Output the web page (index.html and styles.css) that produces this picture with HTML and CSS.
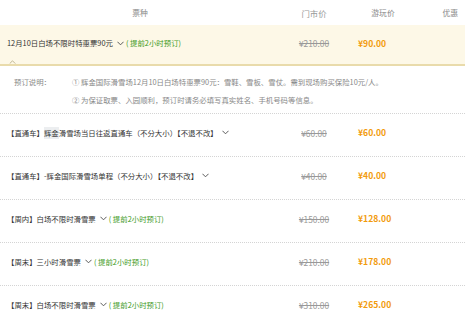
FILE: index.html
```html
<!DOCTYPE html>
<html lang="zh">
<head>
<meta charset="utf-8">
<link rel="stylesheet" href="styles.css">
</head>
<body>
<div class="table">
  <div class="row head">
    <div class="c-name">票种</div>
    <div class="c-mkt">门市价</div>
    <div class="c-play">游玩价</div>
    <div class="c-disc">优惠</div>
  </div>

  <div class="row active">
    <div class="c-name">12月10日白场不限时特惠票90元<svg class="chev" viewBox="0 0 8 5"><polyline points="0.5,0.5 4,4 7.5,0.5"/></svg><span class="tip">( 提前2小时预订)</span></div>
    <div class="c-mkt"><s>¥210.00</s></div>
    <div class="c-play"><b>¥90.00</b></div>
    <div class="c-disc"></div>
    <svg class="caret" viewBox="0 0 8 5"><polyline points="0.5,4.5 4,1 7.5,4.5"/></svg>
  </div>

  <div class="detail">
    <div class="d-label">预订说明：</div>
    <div class="d-body">
      <p>① 辉金国际滑雪场12月10日白场特惠票90元：雪鞋、雪板、雪仗。需到现场购买保险10元/人。</p>
      <p>② 为保证取票、入园顺利，预订时请务必填写真实姓名、手机号码等信息。</p>
    </div>
  </div>

  <div class="row item">
    <div class="c-name">【直通车】<span class="hl">辉金</span>滑雪场当日往返直通车（不分大小）【不退不改】<svg class="chev" viewBox="0 0 8 5"><polyline points="0.5,0.5 4,4 7.5,0.5"/></svg></div>
    <div class="c-mkt"><s>¥60.00</s></div>
    <div class="c-play"><b>¥60.00</b></div>
    <div class="c-disc"></div>
  </div>

  <div class="row item">
    <div class="c-name">【直通车】-辉金国际滑雪场单程（不分大小）【不退不改】<svg class="chev" viewBox="0 0 8 5"><polyline points="0.5,0.5 4,4 7.5,0.5"/></svg></div>
    <div class="c-mkt"><s>¥40.00</s></div>
    <div class="c-play"><b>¥40.00</b></div>
    <div class="c-disc"></div>
  </div>

  <div class="row item">
    <div class="c-name">【周内】白场不限时滑雪票<svg class="chev" viewBox="0 0 8 5"><polyline points="0.5,0.5 4,4 7.5,0.5"/></svg><span class="tip">( 提前2小时预订)</span></div>
    <div class="c-mkt"><s>¥150.00</s></div>
    <div class="c-play"><b>¥128.00</b></div>
    <div class="c-disc"></div>
  </div>

  <div class="row item">
    <div class="c-name">【周末】三小时滑雪票<svg class="chev" viewBox="0 0 8 5"><polyline points="0.5,0.5 4,4 7.5,0.5"/></svg><span class="tip">( 提前2小时预订)</span></div>
    <div class="c-mkt"><s>¥210.00</s></div>
    <div class="c-play"><b>¥178.00</b></div>
    <div class="c-disc"></div>
  </div>

  <div class="row item">
    <div class="c-name">【周末】白场不限时滑雪票<svg class="chev" viewBox="0 0 8 5"><polyline points="0.5,0.5 4,4 7.5,0.5"/></svg><span class="tip">( 提前2小时预订)</span></div>
    <div class="c-mkt"><s>¥310.00</s></div>
    <div class="c-play"><b>¥265.00</b></div>
    <div class="c-disc"></div>
  </div>
</div>
</body>
</html>
```

FILE: styles.css
```css
* { box-sizing: border-box; margin: 0; padding: 0; }
html, body { background: #fff; }
body {
  font-family: "Microsoft YaHei", "Noto Sans CJK SC", "Noto Sans", sans-serif;
  font-size: 7.4px;
  color: #333;
  overflow: hidden;
}
.table { width: 465px; }
.row {
  display: grid;
  grid-template-columns: 280px 68px 60px 1fr;
  align-items: center;
  line-height: 12px;
}
.head { height: 25px; color: #888; font-size: 7.8px; }
.head .c-name { text-align: center; }
.head .c-mkt, .head .c-play { text-align: center; }
.head .c-disc { text-align: right; padding-right: 7px; }

.active {
  position: relative;
  height: 41px;
  background: #fdf8e7;
  border-bottom: 2px solid #e9dbab;
  padding-bottom: 3px;
}
.caret {
  position: absolute;
  left: 9px;
  bottom: 0;
  width: 7px;
  height: 4px;
  fill: none;
  stroke: #b3a780;
  stroke-width: 1;
}
.c-name { padding-left: 7px; white-space: nowrap; display: flex; align-items: center; }
.head .c-name { display: block; padding-left: 0; }
.chev {
  width: 7px;
  height: 5px;
  margin: 0 2px 0 4px;
  fill: none;
  stroke: #555;
  stroke-width: 1.1;
}
.tip { color: #3e9a24; }
.hl { background: #eceef0; }
.c-mkt { text-align: center; color: #999; font-size: 8.4px; }
.c-mkt s { text-decoration: line-through; }
.c-play { padding-left: 10px; }
.c-play b { color: #f29b0d; font-weight: bold; font-size: 8.6px; }

.detail {
  display: flex;
  padding: 7px 0 4px 14px;
  border-bottom: 1px dotted #d4d4d4;
  color: #888;
  line-height: 18px;
}
.d-label { width: 58px; flex: none; }
.d-body p { white-space: nowrap; }

.item {
  height: 43px;
  padding-bottom: 5px;
  border-bottom: 1px dotted #d4d4d4;
}
```
